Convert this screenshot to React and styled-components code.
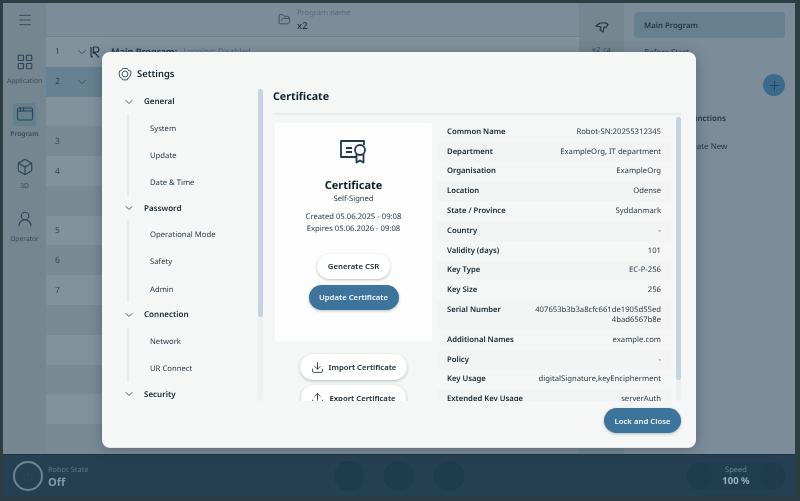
import React from 'react';
import styled, { createGlobalStyle } from 'styled-components';
import {
  AppWindow,
  Box,
  ChevronDown,
  Download,
  FolderOpen,
  LayoutGrid,
  Menu,
  Plus,
  Power,
  Upload,
  UserRound
} from 'lucide-react';

const GlobalStyle = createGlobalStyle`
  html, body {
    margin: 0;
    padding: 0;
    background: #263a40;
  }
  body {
    font-family: "Noto Sans", "Open Sans", sans-serif;
    color: #14252f;
    text-rendering: geometricPrecision;
  }
`

const Page = styled.div`
  position: relative;
  width: 800px;
  height: 501px;
  overflow: hidden;
  background: #2a3e44;
  filter: blur(0.3px);
`

const Shell = styled.div`
  display: flex;
  flex-direction: column;
  height: 100%;
  padding: 3px 5px 4px 3px;
  box-sizing: border-box;
`

const Workspace = styled.div`
  display: grid;
  grid-template-columns: 43px 533px 45px 1fr;
  flex: 1;
  min-height: 0;
  background: #7c8c98;
`

const Sidebar = styled.nav`
  display: flex;
  flex-direction: column;
  align-items: center;
  background: #74868f;
  color: #2b4453;
`

const MenuButton = styled.div`
  display: flex;
  align-items: center;
  justify-content: center;
  height: 34px;
  margin-bottom: 8px;
`

const SideItem = styled.div`
  display: flex;
  flex-direction: column;
  align-items: center;
  width: 100%;
  height: 52.5px;
  padding-top: 5px;
  box-sizing: border-box;
`

const SideIcon = styled.div`
  display: flex;
  align-items: center;
  justify-content: center;
  width: 23px;
  height: 23px;
  border-radius: 3px;
  background: ${(props) => (props.$active ? '#64808f' : 'transparent')};
`

const SideLabel = styled.span`
  margin-top: 3px;
  font-size: 6.7px;
  line-height: 10px;
  font-weight: ${(props) => (props.$active ? 600 : 400)};
  color: #344e5c;
`

const Main = styled.section`
  display: flex;
  flex-direction: column;
  min-width: 0;
`

const ProgramHeader = styled.header`
  display: flex;
  align-items: center;
  gap: 6px;
  height: 34px;
  padding-left: 232px;
  box-sizing: border-box;
  border-bottom: 1px solid #71828d;
  color: #2b4453;
`

const ProgramText = styled.div`
  display: flex;
  flex-direction: column;
`

const ProgramCaption = styled.span`
  font-size: 7.6px;
  line-height: 11px;
  color: #566d7a;
`

const ProgramName = styled.span`
  font-size: 9.5px;
  line-height: 13px;
  font-weight: 500;
  color: #1f3644;
`

const Row = styled.div`
  display: flex;
  align-items: center;
  flex: 1;
  padding-left: 9px;
  color: #2f4856;
  background: ${(props) => {
    if (props.$selected) return '#668191'
    return props.$alt ? '#82929d' : '#7a8a95'
  }};
`

const RowNumber = styled.span`
  width: 20px;
  font-size: 8.5px;
`

const RowChevron = styled.span`
  display: flex;
  width: 15px;
`

const RowTitle = styled.span`
  margin-left: 11px;
  font-size: 9.2px;
  font-weight: 600;
  color: #1f3644;
`

const RowNote = styled.span`
  margin-left: 6px;
  font-size: 8px;
  color: #566d7a;
`

const RowDot = styled.span`
  width: 8px;
  height: 8px;
  margin-left: 50px;
  border-radius: 50%;
  background: #3c6f8f;
`

const ToolStrip = styled.aside`
  display: flex;
  flex-direction: column;
  align-items: center;
  padding-top: 18px;
  background: #74868f;
  color: #2b4453;
`

const ToolLabel = styled.span`
  margin-top: 13px;
  font-size: 7px;
  color: #344e5c;
`

const ProgramPanel = styled.aside`
  display: flex;
  flex-direction: column;
  padding: 9px 10px 0 10px;
  color: #1f3644;
`

const PanelCard = styled.div`
  display: flex;
  align-items: center;
  height: 26px;
  padding: 1px 0 0 10px;
  box-sizing: border-box;
  border-radius: 4px;
  background: #66808f;
  font-size: 7.8px;
  font-weight: 600;
`

const PanelEntry = styled.div`
  padding-left: ${(props) => props.$left}px;
  margin-top: ${(props) => props.$top}px;
  font-size: 8px;
  line-height: 12px;
  font-weight: ${(props) => (props.$bold ? 600 : 400)};
`

const AddButton = styled.div`
  display: flex;
  align-items: center;
  justify-content: center;
  align-self: flex-end;
  width: 22px;
  height: 22px;
  margin-top: 15px;
  border-radius: 50%;
  background: #3a6b8c;
  color: #243f52;
`

const StatusBar = styled.footer`
  display: flex;
  align-items: center;
  height: 43px;
  padding: 0 10px;
  box-sizing: border-box;
  background: #244052;
  border-top: 1px solid #1f3644;
`

const PowerRing = styled.div`
  display: flex;
  align-items: center;
  justify-content: center;
  width: 26px;
  height: 26px;
  border: 2px solid #6f8592;
  border-radius: 50%;
  color: #2f4c5e;
`

const RobotState = styled.div`
  display: flex;
  flex-direction: column;
  margin: 3px 0 0 5px;
  width: 286px;
`

const StateCaption = styled.span`
  font-size: 7.4px;
  line-height: 11px;
  color: #5d7787;
`

const StateValue = styled.span`
  font-size: 11px;
  line-height: 14px;
  font-weight: 700;
  color: #8299a6;
`

const RoundControl = styled.div`
  width: 30px;
  height: 30px;
  margin-right: 20px;
  border-radius: 50%;
  background: #1f3b4e;
`

const SpeedPill = styled.div`
  display: flex;
  align-items: center;
  justify-content: space-between;
  width: 98px;
  height: 28px;
  margin-left: auto;
  border-radius: 14px;
  background: #213d50;
`

const SpeedStep = styled.span`
  width: 25px;
  height: 28px;
  border-radius: 50%;
  background: #1f3b4e;
`

const SpeedText = styled.div`
  display: flex;
  flex-direction: column;
  align-items: center;
`

const SpeedCaption = styled.span`
  font-size: 7.5px;
  line-height: 10px;
  color: #6c8594;
`

const SpeedValue = styled.span`
  font-size: 9.5px;
  line-height: 12px;
  font-weight: 700;
  color: #9fb2bc;
`

const Modal = styled.div`
  position: absolute;
  left: 102px;
  top: 52px;
  display: grid;
  grid-template-columns: 161px 1fr;
  width: 594px;
  height: 395px;
  border-radius: 8px;
  background: #f5f7f6;
  box-shadow: 0 1px 0 #dfe5e8, 0 2px 14px rgba(30, 50, 62, 0.38);
`

const NavColumn = styled.div`
  display: flex;
  flex-direction: column;
`

const ModalHeading = styled.div`
  display: flex;
  align-items: center;
  gap: 5px;
  height: 37px;
  padding: 6px 0 0 16px;
  box-sizing: border-box;
  font-size: 9.4px;
  font-weight: 600;
  color: #14252f;
`

const NavBody = styled.div`
  display: flex;
  height: 312px;
  overflow: hidden;
`

const NavList = styled.div`
  flex: 1;
  padding-left: 21px;
`

const NavHeader = styled.div`
  display: flex;
  align-items: center;
  gap: 9px;
  height: 25px;
  font-size: 8px;
  font-weight: 600;
  color: #14252f;
`

const NavItems = styled.div`
  margin-left: 4px;
  padding-left: 21px;
  border-left: 2px solid #e8ebeb;
`

const NavItem = styled.div`
  display: flex;
  align-items: center;
  height: 27.2px;
  padding-top: 2px;
  box-sizing: border-box;
  font-size: 7.7px;
  color: #263844;
`

const ScrollTrack = styled.div`
  width: 5px;
  height: ${(props) => props.$height}px;
  border-radius: 2px;
  background: #eef1f1;
  flex: none;
`

const ScrollThumb = styled.div`
  width: 100%;
  height: ${(props) => props.$height}px;
  border-radius: 2px;
  background: #c3d5e1;
`

const Content = styled.div`
  display: flex;
  flex-direction: column;
  min-width: 0;
`

const ContentTitle = styled.h2`
  margin: 0 15px 0 10px;
  height: 63px;
  padding-top: 35px;
  box-sizing: border-box;
  border-bottom: 2px solid #e9ecec;
  font-size: 10.7px;
  line-height: 20px;
  font-weight: 700;
  color: #0f1f28;
`

const ContentBody = styled.div`
  display: grid;
  grid-template-columns: 157px 234px 5px;
  column-gap: 5px;
  height: 284px;
  margin-top: 2px;
  padding-left: 12px;
  overflow: hidden;
`

const CertColumn = styled.div`
  display: flex;
  flex-direction: column;
  align-items: center;
  padding-top: 6px;
`

const CertCard = styled.div`
  display: flex;
  flex-direction: column;
  align-items: center;
  width: 100%;
  height: 219px;
  flex: none;
  padding-top: 17px;
  box-sizing: border-box;
  border-radius: 3px;
  background: #fdfdfd;
`

const CertName = styled.div`
  margin-top: 14px;
  font-size: 11px;
  line-height: 15px;
  font-weight: 700;
  color: #0f1f28;
`

const CertKind = styled.div`
  font-size: 7.6px;
  line-height: 12px;
  color: #263844;
`

const CertDates = styled.div`
  margin-top: 6px;
  font-size: 7.7px;
  line-height: 12.4px;
  text-align: center;
  color: #263844;
`

const PillButton = styled.button`
  display: flex;
  align-items: center;
  justify-content: center;
  gap: 5px;
  flex: none;
  width: ${(props) => props.$width}px;
  height: ${(props) => props.$height || 25}px;
  margin-top: ${(props) => props.$top || 0}px;
  padding: 0;
  border: 0;
  border-radius: 13px;
  background: ${(props) => (props.$primary ? '#3c749b' : '#ffffff')};
  box-shadow: 0 1px 3px rgba(30, 50, 62, 0.3);
  font-family: inherit;
  font-size: 7.75px;
  font-weight: 600;
  color: ${(props) => (props.$primary ? '#f4f8fa' : '#14252f')};
`

const DetailTable = styled.div`
  padding-top: 5px;
`

const DetailRow = styled.div`
  display: flex;
  justify-content: space-between;
  align-items: flex-start;
  padding: 4.9px 10px;
  box-sizing: border-box;
  min-height: 19.8px;
  background: ${(props) => (props.$alt ? '#f2f4f4' : 'transparent')};
  font-size: 7.7px;
  line-height: 10px;
`

const DetailLabel = styled.span`
  font-weight: 600;
  color: #14252f;
  white-space: nowrap;
`

const DetailValue = styled.span`
  color: #2a3a44;
  text-align: right;
  white-space: pre-line;
`

const ModalFooter = styled.div`
  display: flex;
  justify-content: flex-end;
  padding: 7px 15px 0 0;
`

const rows = [
  { number: 1, chevron: true, title: true },
  { number: 2, chevron: true, selected: true },
  {},
  { number: 3 },
  { number: 4 },
  { dot: true },
  { number: 5 },
  { number: 6 },
  { number: 7 },
  {},
  {},
  {},
  {},
  {}
]

const navGroups = [
  { title: 'General', items: ['System', 'Update', 'Date & Time'] },
  { title: 'Password', items: ['Operational Mode', 'Safety', 'Admin'] },
  { title: 'Connection', items: ['Network', 'UR Connect'] },
  { title: 'Security', items: [] }
]

const details = [
  ['Common Name', 'Robot-SN:20255312345'],
  ['Department', 'ExampleOrg, IT department'],
  ['Organisation', 'ExampleOrg'],
  ['Location', 'Odense'],
  ['State / Province', 'Syddanmark'],
  ['Country', '-'],
  ['Validity (days)', '101'],
  ['Key Type', 'EC-P-256'],
  ['Key Size', '256'],
  ['Serial Number', '407653b3b3a8cfc661de1905d55ed\n4bad6567b8e'],
  ['Additional Names', 'example.com'],
  ['Policy', '-'],
  ['Key Usage', 'digitalSignature,keyEncipherment'],
  ['Extended Key Usage', 'serverAuth']
]

const sideItems = [
  { label: 'Application', Icon: LayoutGrid },
  { label: 'Program', Icon: AppWindow, active: true },
  { label: '3D', Icon: Box },
  { label: 'Operator', Icon: UserRound }
]

const SettingsIcon = () => (
  <svg width="14" height="14" viewBox="0 0 24 24" fill="none" stroke="#2b4453" strokeWidth="1.5" strokeLinejoin="round">
    <path d="M8 2.5h8l2 3.4 4 1L22 12l-2 5.2-3 1.8-1 3H8l-1.6-3-3.4-1.8L2 12l.6-5.2 3.6-1z" />
    <circle cx="12" cy="12" r="5" />
  </svg>
)

const CertificateIcon = () => (
  <svg width="28" height="24" viewBox="0 0 28 24" fill="none" stroke="#1f3a4d" strokeWidth="1.8" strokeLinejoin="round">
    <path d="M16 17H1V1h23v4" />
    <path d="M6 8h6M6 12h6" />
    <circle cx="20" cy="10" r="5" />
    <path d="M16.5 14v8.5l3.5-2 3.5 2V14" />
  </svg>
)

const UrLogo = () => (
  <svg width="10" height="12" viewBox="0 0 10 12" fill="none" stroke="#1f3644" strokeWidth="1.2">
    <path d="M1 1v8q0 2 2 2" />
    <path d="M3.4 1v7M3.4 1h3q2.4 0 2.4 2.4T6.4 6H4l5 5.5" />
  </svg>
)

const HandIcon = () => (
  <svg width="14" height="12" viewBox="0 0 14 12" fill="none" stroke="#1f3644" strokeWidth="1.2" strokeLinejoin="round">
    <path d="M1 5l4-3h6l2 1.5-2 3-2-.5-1 5-3-2 1-3z" />
  </svg>
)

const App = () => (
  <Page>
    <GlobalStyle />
    <Shell>
      <Workspace>
        <Sidebar>
          <MenuButton><Menu size={16} strokeWidth={1.3} /></MenuButton>
          {sideItems.map(({ label, Icon, active }) => (
            <SideItem key={label}>
              <SideIcon $active={active}><Icon size={18} strokeWidth={1.5} /></SideIcon>
              <SideLabel $active={active}>{label}</SideLabel>
            </SideItem>
          ))}
        </Sidebar>
        <Main>
          <ProgramHeader>
            <FolderOpen size={13} strokeWidth={1.4} />
            <ProgramText>
              <ProgramCaption>Program name</ProgramCaption>
              <ProgramName>x2</ProgramName>
            </ProgramText>
          </ProgramHeader>
          {rows.map((row, index) => (
            <Row key={index} $alt={index % 2 === 0} $selected={row.selected}>
              <RowNumber>{row.number}</RowNumber>
              <RowChevron>{row.chevron && <ChevronDown size={14} strokeWidth={1.4} />}</RowChevron>
              {row.title && (
                <>
                  <UrLogo />
                  <RowTitle>Main Program:</RowTitle>
                  <RowNote>Looping: Disabled</RowNote>
                </>
              )}
              {row.dot && <RowDot />}
            </Row>
          ))}
        </Main>
        <ToolStrip>
          <HandIcon />
          <ToolLabel>e2_ca</ToolLabel>
        </ToolStrip>
        <ProgramPanel>
          <PanelCard>Main Program</PanelCard>
          <PanelEntry $left={10} $top={9}>Before Start</PanelEntry>
          <AddButton><Plus size={15} strokeWidth={1.4} /></AddButton>
          <PanelEntry $left={54} $top={17} $bold>Functions</PanelEntry>
          <PanelEntry $left={50} $top={16}>Create New</PanelEntry>
        </ProgramPanel>
      </Workspace>
      <StatusBar>
        <PowerRing><Power size={12} strokeWidth={1.2} /></PowerRing>
        <RobotState>
          <StateCaption>Robot State</StateCaption>
          <StateValue>Off</StateValue>
        </RobotState>
        <RoundControl />
        <RoundControl />
        <RoundControl />
        <SpeedPill>
          <SpeedStep />
          <SpeedText>
            <SpeedCaption>Speed</SpeedCaption>
            <SpeedValue>100 %</SpeedValue>
          </SpeedText>
          <SpeedStep />
        </SpeedPill>
      </StatusBar>
    </Shell>

    <Modal>
      <NavColumn>
        <ModalHeading>
          <SettingsIcon />
          Settings
        </ModalHeading>
        <NavBody>
          <NavList>
            {navGroups.map((group) => (
              <div key={group.title}>
                <NavHeader>
                  <ChevronDown size={12} strokeWidth={1.5} />
                  {group.title}
                </NavHeader>
                {group.items.length > 0 && (
                  <NavItems>
                    {group.items.map((item) => <NavItem key={item}>{item}</NavItem>)}
                  </NavItems>
                )}
              </div>
            ))}
          </NavList>
          <ScrollTrack $height={312}><ScrollThumb $height={228} /></ScrollTrack>
        </NavBody>
      </NavColumn>
      <Content>
        <ContentTitle>Certificate</ContentTitle>
        <ContentBody>
          <CertColumn>
            <CertCard>
              <CertificateIcon />
              <CertName>Certificate</CertName>
              <CertKind>Self-Signed</CertKind>
              <CertDates>
                Created 05.06.2025 - 09:08
                <br />
                Expires 05.06.2026 - 09:08
              </CertDates>
              <PillButton $width={73} $top={18}>Generate CSR</PillButton>
              <PillButton $width={90} $top={6} $primary>Update Certificate</PillButton>
            </CertCard>
            <PillButton $width={107} $height={26} $top={12}>
              <Download size={13} strokeWidth={1.5} />
              Import Certificate
            </PillButton>
            <PillButton $width={105} $height={26} $top={5}>
              <Upload size={13} strokeWidth={1.5} />
              Export Certificate
            </PillButton>
          </CertColumn>
          <DetailTable>
            {details.map(([label, value], index) => (
              <DetailRow key={label} $alt={index % 2 === 1}>
                <DetailLabel>{label}</DetailLabel>
                <DetailValue>{value}</DetailValue>
              </DetailRow>
            ))}
          </DetailTable>
          <ScrollTrack $height={284}><ScrollThumb $height={263} /></ScrollTrack>
        </ContentBody>
        <ModalFooter>
          <PillButton $width={77} $primary>Lock and Close</PillButton>
        </ModalFooter>
      </Content>
    </Modal>
  </Page>
);

export default App;
